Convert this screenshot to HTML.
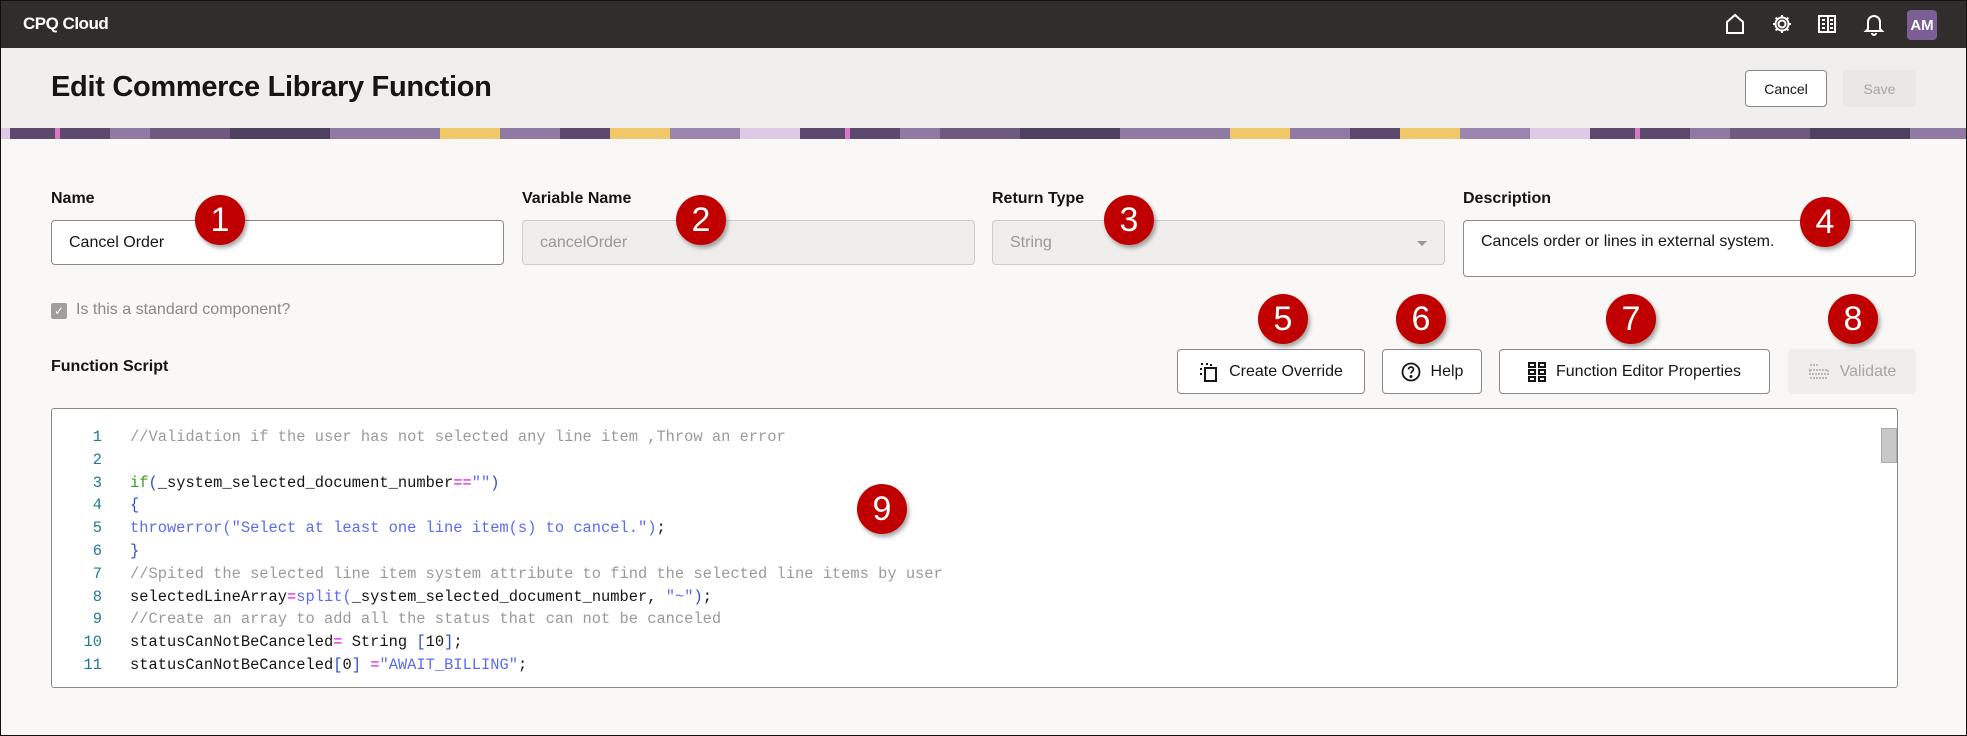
<!DOCTYPE html>
<html><head><meta charset="utf-8"><style>
*{box-sizing:border-box;margin:0;padding:0}
body{width:1967px;height:736px;overflow:hidden;background:#f9f8f6;font-family:"Liberation Sans",sans-serif;position:relative;color:#161513}
.frame{position:absolute;left:0;top:0;width:1967px;height:736px;border:1.5px solid #111;pointer-events:none;z-index:10}
.hdr{position:absolute;left:0;top:0;width:1967px;height:48px;background:#312d2a}
.logo{position:absolute;left:23px;top:14px;color:#fff;font-weight:bold;font-size:17px;letter-spacing:-0.5px}
.ttl{position:absolute;left:0;top:48px;width:1967px;height:80px;background:#f0efed}
.ttl h1{position:absolute;left:51px;top:23px;font-size:29px;font-weight:bold;letter-spacing:-0.3px}
.banner{position:absolute;left:0;top:128px;width:1967px;height:11px;
background:repeating-linear-gradient(90deg,#dccbe4 0 10px,#5c4a6e 10px 55px,#d976c6 55px 60px,#5c4a6e 60px 110px,#8f7aa3 110px 150px,#6d5a7e 150px 230px,#4f4060 230px 330px,#8f7aa3 330px 440px,#f0c86a 440px 500px,#8f7aa3 500px 560px,#5c4a6e 560px 610px,#f0c86a 610px 670px,#9a86ad 670px 740px,#dccbe4 740px 790px)}
.btn{position:absolute;border:1px solid #8b8986;border-radius:4px;background:#fff;font-size:16px;display:flex;align-items:center;justify-content:center;gap:10px;color:#161513}
.lbl{position:absolute;top:190px;font-size:16px;font-weight:bold}
.inp{position:absolute;top:220px;height:45px;border:1px solid #8b8986;border-radius:4px;background:#fff;font-size:16px;padding:0 17px;display:flex;align-items:center}
.dis{background:#efeeec;border-color:#ccc;color:#9b9895}
.num{position:absolute;width:50px;height:50px;border-radius:50%;background:#c00000;color:#fff;font-size:34px;display:flex;align-items:center;justify-content:center;box-shadow:2px 3px 4px rgba(0,0,0,.35)}
.ed{position:absolute;left:51px;top:408px;width:1847px;height:280px;border:1px solid #8b8986;border-radius:3px;background:#fff}
.code{position:absolute;left:0;top:17px;font-family:"Liberation Mono",monospace;font-size:15.4px;line-height:22.8px;white-space:pre}
.ln{position:absolute;left:0;width:50px;text-align:right;color:#237893}
.cx{position:absolute;left:78px}
.c{color:#9a9a9a}.k{color:#3b9c2c}.p{color:#e000e0}.s{color:#5a6cf0}.b{color:#2a50c8}
</style></head><body>
<div class="hdr"><div class="logo">CPQ Cloud</div>
<svg style="position:absolute;left:1724px;top:13px" width="22" height="22" viewBox="0 0 22 22" fill="none" stroke="#fff" stroke-width="2"><path d="M3 20V9L11 2l8 7v11z"/></svg>
<svg style="position:absolute;left:1771px;top:13px" width="22" height="22" viewBox="0 0 22 22" fill="none" stroke="#fff" stroke-width="2"><circle cx="11" cy="11" r="3.5"/><path d="M11 2v3M11 17v3M2 11h3M17 11h3M4.6 4.6l2.1 2.1M15.3 15.3l2.1 2.1M4.6 17.4l2.1-2.1M15.3 6.7l2.1-2.1"/><circle cx="11" cy="11" r="6.5"/></svg>
<svg style="position:absolute;left:1817px;top:14px" width="20" height="20" viewBox="0 0 20 20" fill="none" stroke="#fff" stroke-width="2"><rect x="2" y="2" width="16" height="16"/><path d="M11 2v16M5 6h3M5 10h3M5 14h3M13 6h3M13 10h3M13 14h3"/></svg>
<svg style="position:absolute;left:1863px;top:12px" width="22" height="24" viewBox="0 0 22 24" fill="none" stroke="#fff" stroke-width="2"><path d="M5 17V10a6 6 0 0112 0v7l2 2H3z"/><path d="M9 21a2 2 0 004 0"/></svg>
<div style="position:absolute;left:1907px;top:10px;width:30px;height:30px;border-radius:4px;background:#7b5e96;color:#fff;font-weight:bold;font-size:15px;display:flex;align-items:center;justify-content:center">AM</div>
</div>
<div class="ttl"><h1>Edit Commerce Library Function</h1>
<div class="btn" style="left:1745px;top:22px;width:82px;height:37px;font-size:14px">Cancel</div>
<div class="btn" style="left:1843px;top:22px;width:73px;height:37px;font-size:14px;background:#e9e8e6;border-color:#e9e8e6;color:#a8a6a3">Save</div>
</div>
<div class="banner"></div>

<div class="lbl" style="left:51px">Name</div>
<div class="lbl" style="left:522px">Variable Name</div>
<div class="lbl" style="left:992px">Return Type</div>
<div class="lbl" style="left:1463px">Description</div>
<div class="inp" style="left:51px;width:453px">Cancel Order</div>
<div class="inp dis" style="left:522px;width:453px">cancelOrder</div>
<div class="inp dis" style="left:992px;width:453px">String<span style="position:absolute;right:17px;top:20px;border:5px solid transparent;border-top:5px solid #9b9895"></span></div>
<div class="inp" style="left:1463px;width:453px;height:57px;align-items:flex-start;padding-top:12px">Cancels order or lines in external system.</div>

<div style="position:absolute;left:51px;top:303px;width:16px;height:16px;border-radius:2px;background:#a19f9c;color:#fff;font-size:12px;text-align:center;line-height:16px">✓</div>
<div style="position:absolute;left:76px;top:301px;font-size:16px;color:#8b8986">Is this a standard component?</div>
<div class="lbl" style="left:51px;top:358px">Function Script</div>

<div class="btn" style="left:1177px;top:349px;width:188px;height:45px"><svg width="20" height="20" viewBox="0 0 20 20" fill="none" stroke="#161513" stroke-width="2"><path d="M2 2h2M7 2h2M2 6v2M2 11v2M12 2v2" /><rect x="6" y="6" width="11" height="13"/></svg>Create Override</div>
<div class="btn" style="left:1382px;top:349px;width:100px;height:45px"><svg width="20" height="20" viewBox="0 0 20 20" fill="none" stroke="#161513" stroke-width="1.8"><circle cx="10" cy="10" r="8.5"/><path d="M7.5 7.5a2.5 2.5 0 115 0c0 1.7-2.5 2-2.5 4"/><circle cx="10" cy="14.5" r=".6" fill="#161513"/></svg>Help</div>
<div class="btn" style="left:1499px;top:349px;width:271px;height:45px"><svg width="18" height="20" viewBox="0 0 18 20" fill="none" stroke="#161513" stroke-width="2"><rect x="1" y="1" width="6" height="4"/><rect x="11" y="1" width="6" height="4"/><rect x="1" y="8" width="6" height="4"/><rect x="11" y="8" width="6" height="4"/><rect x="1" y="15" width="6" height="4"/><rect x="11" y="15" width="6" height="4"/></svg>Function Editor Properties</div>
<div class="btn" style="left:1788px;top:349px;width:128px;height:45px;background:#efeeec;border-color:#efeeec;color:#a8a6a3"><svg width="22" height="20" viewBox="0 0 22 20" fill="none" stroke="#bbb" stroke-width="2"><path d="M2 3h8M2 8h18v4H2zM2 16h18" stroke-dasharray="2 1"/></svg>Validate</div>

<div class="ed">
<div class="code"><div class="ln">1
2
3
4
5
6
7
8
9
10
11</div><div class="cx"><span class="c">//Validation if the user has not selected any line item ,Throw an error</span>

<span class="k">if</span><span class="b">(</span>_system_selected_document_number<span class="p">==</span><span class="s">""</span><span class="b">)</span>
<span class="b">{</span>
<span class="s">throwerror("Select at least one line item(s) to cancel.")</span>;
<span class="b">}</span>
<span class="c">//Spited the selected line item system attribute to find the selected line items by user</span>
selectedLineArray<span class="p">=</span><span class="s">split(</span>_system_selected_document_number, <span class="s">"~"</span><span class="b">)</span>;
<span class="c">//Create an array to add all the status that can not be canceled</span>
statusCanNotBeCanceled<span class="p">=</span> String <span class="b">[</span>10<span class="b">]</span>;
statusCanNotBeCanceled<span class="b">[</span>0<span class="b">]</span> <span class="p">=</span><span class="s">"AWAIT_BILLING"</span>;</div></div>
<div style="position:absolute;left:1829px;top:19px;width:16px;height:35px;background:#c8c8c8;border:1px solid #aaa"></div>
</div>

<div class="num" style="left:195px;top:195px">1</div>
<div class="num" style="left:676px;top:195px">2</div>
<div class="num" style="left:1104px;top:195px">3</div>
<div class="num" style="left:1800px;top:197px">4</div>
<div class="num" style="left:1258px;top:294px">5</div>
<div class="num" style="left:1396px;top:294px">6</div>
<div class="num" style="left:1606px;top:294px">7</div>
<div class="num" style="left:1828px;top:294px">8</div>
<div class="num" style="left:857px;top:484px">9</div>
<div class="frame"></div>
</body></html>
